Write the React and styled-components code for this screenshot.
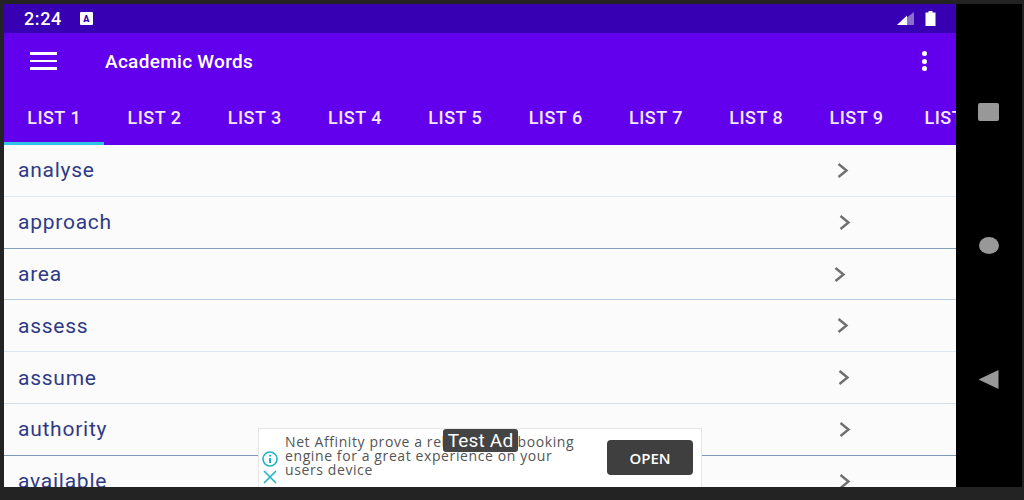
import React from "react";
import styled, { createGlobalStyle } from "styled-components";

const TABS = ["LIST 1", "LIST 2", "LIST 3", "LIST 4", "LIST 5", "LIST 6", "LIST 7", "LIST 8", "LIST 9", "LIST 10"];

const WORDS = [
  { word: "analyse", arrow: 843, line: "#dfe9f3" },
  { word: "approach", arrow: 845, line: "#84a0bd" },
  { word: "area", arrow: 840, line: "#b8cbdf" },
  { word: "assess", arrow: 843, line: "#dbe6f2" },
  { word: "assume", arrow: 844, line: "#d2e0ee" },
  { word: "authority", arrow: 845, line: "#7b98b6" },
  { word: "available", arrow: 845, line: "transparent" },
];

const App = () => {
  return (
    <>
      <GlobalStyle />
      <Frame>
        <Screen>
          <StatusBar>
            <Time>2:24</Time>
            <KeyboardBadge>A</KeyboardBadge>
            <StatusIcons>
              <svg width="17" height="14" viewBox="0 0 17 14">
                <path d="M17 0V13H0Z" fill="#8a6fd0" />
                <path d="M10 6.5V13H0L10 3.5Z" fill="#fff" />
              </svg>
              <svg width="11" height="15" viewBox="0 0 11 15">
                <path d="M3.5 0H7.5V1.5H10.5V15H0.5V1.5H3.5Z" fill="#fff" />
              </svg>
            </StatusIcons>
          </StatusBar>
          <AppBar>
            <Burger>
              <i />
              <i />
              <i />
            </Burger>
            <Title>Academic Words</Title>
            <MoreButton>
              <i />
              <i />
              <i />
            </MoreButton>
          </AppBar>
          <TabBar>
            {TABS.map((tab, index) => (
              <Tab key={tab} $active={index === 0}>
                {tab}
              </Tab>
            ))}
          </TabBar>
          <WordList>
            {WORDS.map(({ word, arrow, line }) => (
              <WordRow key={word} $line={line}>
                <Word>{word}</Word>
                <Arrow $x={arrow} width="14" height="17" viewBox="0 0 14 17">
                  <path d="M2.5 2L10.5 8.5L2.5 15" />
                </Arrow>
              </WordRow>
            ))}
          </WordList>
          <AdBanner>
            <AdIcons>
              <svg width="18" height="18" viewBox="0 0 18 18">
                <circle cx="9" cy="9" r="7" />
                <path d="M9 8V13M9 5V6.5" strokeWidth="2" />
              </svg>
              <svg width="16" height="16" viewBox="0 0 16 16">
                <path d="M2 2L14 14M14 2L2 14" />
              </svg>
            </AdIcons>
            <AdText>
              Net Affinity prove a reliable web booking engine for a great experience on your users device
            </AdText>
            <OpenButton>OPEN</OpenButton>
            <TestLabel>Test Ad</TestLabel>
          </AdBanner>
        </Screen>
        <NavBar>
          <NavSquare />
          <NavCircle />
          <NavBack />
        </NavBar>
      </Frame>
    </>
  );
};

const GlobalStyle = createGlobalStyle`
  html, body {
    margin: 0;
    padding: 0;
    background: #232323;
  }
  body {
    font-family: Roboto, "Liberation Sans", sans-serif;
  }
`;

const Frame = styled.div`
  width: 1024px;
  height: 500px;
  box-sizing: border-box;
  padding: 4px 2px 13px 4px;
  display: flex;
  background: #232323;
  overflow: hidden;
`;

const Screen = styled.div`
  position: relative;
  width: 952px;
  display: flex;
  flex-direction: column;
  background: #fbfbfc;
  overflow: hidden;
`;

const StatusBar = styled.div`
  height: 29px;
  flex-shrink: 0;
  display: flex;
  align-items: center;
  padding: 0 20px;
  background: #3700b3;
  color: #fff;
`;

const Time = styled.span`
  font-size: 18px;
  font-weight: 500;
  letter-spacing: 0.6px;
`;

const KeyboardBadge = styled.span`
  width: 13px;
  height: 13px;
  margin-left: 18px;
  display: flex;
  align-items: center;
  justify-content: center;
  background: #fff;
  color: #3700b3;
  border-radius: 1px;
  font-size: 9px;
  font-weight: 900;
`;

const StatusIcons = styled.div`
  margin-left: auto;
  display: flex;
  align-items: center;
  gap: 11px;
`;

const AppBar = styled.div`
  height: 56px;
  flex-shrink: 0;
  display: flex;
  align-items: center;
  padding: 0 26px;
  background: #6200ee;
  color: #fff;
`;

const Burger = styled.div`
  width: 27px;
  display: flex;
  flex-direction: column;
  gap: 5px;

  i {
    display: block;
    height: 2.4px;
    background: #fff;
  }
`;

const Title = styled.div`
  margin-left: 48px;
  font-size: 19px;
  font-weight: 500;
  letter-spacing: 0.3px;
`;

const MoreButton = styled.div`
  margin-left: auto;
  margin-right: 3px;
  display: flex;
  flex-direction: column;
  gap: 2.3px;

  i {
    display: block;
    width: 5px;
    height: 5px;
    border-radius: 50%;
    background: #fff;
  }
`;

const TabBar = styled.div`
  height: 56px;
  flex-shrink: 0;
  display: flex;
  background: #6200ee;
`;

const Tab = styled.div`
  width: 100.3px;
  flex-shrink: 0;
  box-sizing: border-box;
  padding-top: 3px;
  display: flex;
  align-items: center;
  justify-content: center;
  white-space: nowrap;
  color: #f3e8ff;
  font-size: 18px;
  font-weight: 500;
  letter-spacing: 0.5px;
  border-bottom: 3px solid ${(props) => (props.$active ? "#2fc4e6" : "transparent")};
`;

const WordList = styled.div`
  display: flex;
  flex-direction: column;
`;

const WordRow = styled.div`
  position: relative;
  height: 51.8px;
  flex-shrink: 0;
  box-sizing: border-box;
  display: flex;
  align-items: center;
  padding-left: 14px;
  border-bottom: 1px solid ${(props) => props.$line};
`;

const Word = styled.span`
  color: #2f3a85;
  font-size: 21px;
  letter-spacing: 0.75px;
`;

const Arrow = styled.svg`
  position: absolute;
  left: ${(props) => props.$x - 4 - 7}px;
  top: 17px;
  fill: none;
  stroke: #6f6f6f;
  stroke-width: 2.4;
`;

const AdBanner = styled.div`
  position: absolute;
  left: 254px;
  bottom: 0;
  width: 444px;
  height: 59px;
  box-sizing: border-box;
  display: flex;
  align-items: flex-start;
  background: #fff;
  border: 1px solid #e6e6e6;
  border-bottom: 0;
`;

const AdIcons = styled.div`
  width: 21px;
  height: 100%;
  flex-shrink: 0;
  padding-top: 21px;
  box-sizing: border-box;
  display: flex;
  flex-direction: column;
  align-items: center;
  gap: 1px;

  svg {
    fill: none;
    stroke: #1fb3c4;
    stroke-width: 1.6;
    flex-shrink: 0;
  }
`;

const AdText = styled.div`
  width: 290px;
  margin-top: 6px;
  margin-left: 5px;
  color: #555;
  font-family: "Open Sans", Roboto, sans-serif;
  font-size: 14px;
  letter-spacing: 0.6px;
  line-height: 14px;
`;

const OpenButton = styled.div`
  position: absolute;
  right: 8px;
  top: 11px;
  width: 86px;
  height: 35px;
  display: flex;
  align-items: center;
  justify-content: center;
  border-radius: 4px;
  background: #3f3f3f;
  color: #fff;
  font-family: "Open Sans", Roboto, sans-serif;
  font-size: 15px;
  font-weight: 600;
`;

const TestLabel = styled.div`
  position: absolute;
  left: 184px;
  top: 0;
  width: 75px;
  height: 23px;
  display: flex;
  align-items: center;
  justify-content: center;
  border-radius: 3px;
  background: #444;
  color: #fff;
  font-size: 19px;
  letter-spacing: 0.2px;
`;

const NavBar = styled.div`
  width: 66px;
  display: flex;
  flex-direction: column;
  align-items: center;
  padding: 99px 1px 0 0;
  box-sizing: border-box;
  background: #000;
`;

const NavSquare = styled.div`
  width: 21px;
  height: 18px;
  border-radius: 2px;
  background: #989898;
`;

const NavCircle = styled.div`
  width: 20px;
  height: 17px;
  margin-top: 116px;
  border-radius: 50%;
  background: #989898;
`;

const NavBack = styled.div`
  width: 20px;
  height: 19px;
  margin-top: 116px;
  background: #989898;
  clip-path: polygon(100% 0, 100% 100%, 0 50%);
`;

export default App;
